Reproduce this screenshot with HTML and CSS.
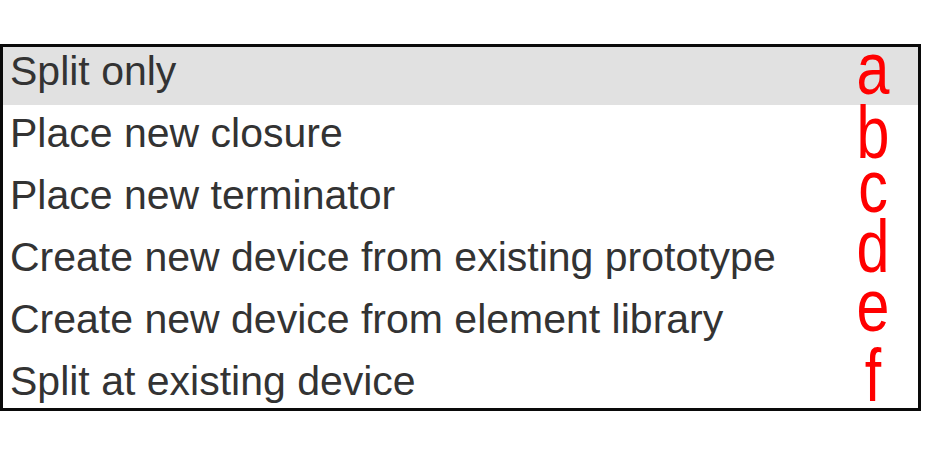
FILE: index.html
```html
<!DOCTYPE html>
<html>
<head>
<meta charset="utf-8">
<link rel="stylesheet" href="styles.css">
</head>
<body>
<div class="box">
  <ul class="list">
    <li class="row selected">Split only</li>
    <li class="row">Place new closure</li>
    <li class="row">Place new terminator</li>
    <li class="row">Create new device from existing prototype</li>
    <li class="row">Create new device from element library</li>
    <li class="row">Split at existing device</li>
  </ul>
  <div class="marks">
    <span class="mark mark-a">a</span>
    <span class="mark mark-b">b</span>
    <span class="mark mark-c">c</span>
    <span class="mark mark-d">d</span>
    <span class="mark mark-e">e</span>
    <span class="mark mark-f">f</span>
  </div>
</div>
</body>
</html>
```

FILE: styles.css
```css
html, body {
  margin: 0;
  padding: 0;
  background: #ffffff;
}

body {
  width: 934px;
  height: 462px;
  overflow: hidden;
}

.box {
  position: relative;
  margin: 44px 0 0 0;
  width: 915px;
  height: 361px;
  border: 3px solid #0a0a0a;
  background: #ffffff;
}

.list {
  list-style: none;
  margin: 0;
  padding: 0;
  height: 361px;
  overflow: hidden;
  display: flex;
  flex-direction: column;
  gap: 4px;
}

.row {
  flex: 0 0 58px;
  height: 58px;
  padding-left: 7px;
  font-family: "Liberation Sans", Arial, sans-serif;
  font-size: 41px;
  line-height: 48px;
  color: #333333;
  white-space: nowrap;
}

.row.selected {
  background: #e1e1e1;
}

.marks {
  position: absolute;
  left: 849px;
  top: 0;
  width: 42px;
  height: 100%;
}

.mark {
  position: absolute;
  left: 0;
  width: 42px;
  text-align: center;
  font-family: "Liberation Sans", Arial, sans-serif;
  font-size: 74px;
  line-height: 54px;
  color: #ff0000;
  transform: scaleX(0.8);
}

.mark-a { top: -5px; }
.mark-b { top: 59px; }
.mark-c { top: 113px; }
.mark-d { top: 173px; }
.mark-e { top: 232px; }
.mark-f { top: 302px; }
```
